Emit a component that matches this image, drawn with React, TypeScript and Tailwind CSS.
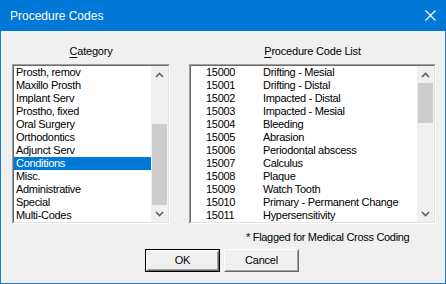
import { useState } from 'react';

const categories = [
  'Prosth, remov',
  'Maxillo Prosth',
  'Implant Serv',
  'Prostho, fixed',
  'Oral Surgery',
  'Orthodontics',
  'Adjunct Serv',
  'Conditions',
  'Misc.',
  'Administrative',
  'Special',
  'Multi-Codes',
];

const codes = [
  ['15000', 'Drifting - Mesial'],
  ['15001', 'Drifting - Distal'],
  ['15002', 'Impacted - Distal'],
  ['15003', 'Impacted - Mesial'],
  ['15004', 'Bleeding'],
  ['15005', 'Abrasion'],
  ['15006', 'Periodontal abscess'],
  ['15007', 'Calculus'],
  ['15008', 'Plaque'],
  ['15009', 'Watch Tooth'],
  ['15010', 'Primary - Permanent Change'],
  ['15011', 'Hypersensitivity'],
];

const font = { fontFamily: '"Liberation Sans", Arial, sans-serif' };

function Chevron({ up }: { up?: boolean }) {
  return (
    <svg width="9" height="6" viewBox="0 0 9 6" className="block">
      <path
        d={up ? 'M1 5 L4.5 1.5 L8 5' : 'M1 1 L4.5 4.5 L8 1'}
        fill="none"
        stroke="#606060"
        strokeWidth="1.6"
      />
    </svg>
  );
}

// 스크롤바 (위/아래 화살표 + thumb)
function ScrollBar({ thumbTop, thumbHeight }: { thumbTop: number; thumbHeight: number }) {
  return (
    <div className="relative w-[17px] h-full bg-[#f0f0f0] flex flex-col">
      <div className="h-[17px] flex items-center justify-center">
        <Chevron up />
      </div>
      <div className="flex-1" />
      <div className="h-[17px] flex items-center justify-center">
        <Chevron />
      </div>
      <div
        className="absolute left-[1px] right-[1px] bg-[#cdcdcd]"
        style={{ top: thumbTop, height: thumbHeight }}
      />
    </div>
  );
}

function ListBox({ children, thumbTop, thumbHeight }: { children: React.ReactNode; thumbTop: number; thumbHeight: number }) {
  return (
    <div className="h-[160px] border border-t-[#a0a0a0] border-l-[#a0a0a0] border-r-white border-b-white">
      <div className="h-full flex bg-white border border-t-[#696969] border-l-[#696969] border-r-[#e3e3e3] border-b-[#e3e3e3]">
        <div className="flex-1 overflow-hidden">{children}</div>
        <ScrollBar thumbTop={thumbTop} thumbHeight={thumbHeight} />
      </div>
    </div>
  );
}

function Button({ label, isDefault }: { label: React.ReactNode; isDefault?: boolean }) {
  return (
    <div className={`w-[75px] h-[23px] ${isDefault ? 'border border-black' : ''}`}>
      <div className="h-full border border-t-white border-l-white border-r-[#696969] border-b-[#696969]">
        <div className="h-full flex items-center justify-center bg-[#f0f0f0] border border-t-[#f0f0f0] border-l-[#f0f0f0] border-r-[#a0a0a0] border-b-[#a0a0a0] text-[11px] tracking-[-0.2px] text-black">
          {label}
        </div>
      </div>
    </div>
  );
}

export default function App() {
  const [selected, setSelected] = useState(7);

  return (
    <div className="w-[446px] h-[284px] flex flex-col bg-[#f0f0f0] border border-t-0 border-[#1a7fd4]" style={font}>
      {/* 타이틀 바 */}
      <div className="h-[31px] shrink-0 -mx-[1px] bg-[#0078d7] flex items-center justify-between pl-[10px] pr-[10px]">
        <span className="text-white text-[12px]">Procedure Codes</span>
        <svg width="11" height="11" viewBox="0 0 11 11">
          <path d="M0.5 0.5 L10.5 10.5 M10.5 0.5 L0.5 10.5" stroke="white" strokeWidth="1.1" />
        </svg>
      </div>

      <div className="flex-1 pl-[11px] pr-[9px] pt-[14px]">
        <div className="flex gap-[19px]">
          {/* Category */}
          <div className="w-[158px]">
            <div className="text-center text-[11px] tracking-[-0.2px] h-[19px] leading-[13px] text-black">
              <span className="underline underline-offset-2">C</span>ategory
            </div>
            <ListBox thumbTop={58} thumbHeight={81}>
              {categories.map((c, i) => (
                <div
                  key={c}
                  onClick={() => setSelected(i)}
                  className={`h-[13px] leading-[13px] pl-[2px] text-[11px] tracking-[-0.3px] whitespace-nowrap ${
                    selected === i ? 'bg-[#0078d7] text-white' : 'text-black'
                  }`}
                >
                  {c}
                </div>
              ))}
            </ListBox>
          </div>

          {/* Procedure Code List */}
          <div className="w-[247px]">
            <div className="text-center text-[11px] tracking-[-0.2px] h-[19px] leading-[13px] text-black">
              <span className="underline underline-offset-2">P</span>rocedure Code List
            </div>
            <ListBox thumbTop={17} thumbHeight={40}>
              {codes.map(([code, desc]) => (
                <div key={code} className="h-[13px] leading-[13px] flex text-[11px] tracking-[-0.3px] text-black whitespace-nowrap">
                  <span className="w-[72px] pl-[15px]">{code}</span>
                  <span>{desc}</span>
                </div>
              ))}
            </ListBox>
            <div className="pl-[57px] pt-[7px] text-[11px] tracking-[-0.3px] leading-[13px] text-black">
              * Flagged for Medical Cross Coding
            </div>
          </div>
        </div>

        <div className="flex gap-[4px] pl-[133px] pt-[5px]">
          <Button label="OK" isDefault />
          <Button label="Cancel" />
        </div>
      </div>
    </div>
  );
}
